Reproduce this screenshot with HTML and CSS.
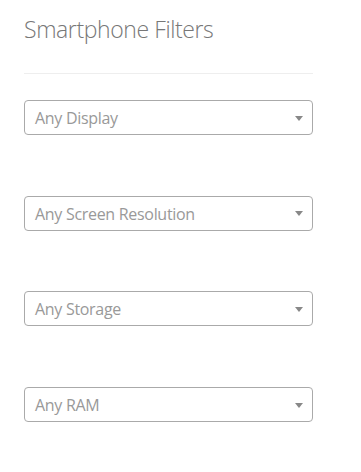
FILE: index.html
```html
<!DOCTYPE html>
<html>
<head>
<meta charset="utf-8">
<link rel="stylesheet" href="styles.css">
</head>
<body>
<div class="panel">
  <h2 class="title">Smartphone Filters</h2>
  <hr class="divider">
  <div class="filters">
    <div class="select"><span>Any Display</span><i class="caret"></i></div>
    <div class="select"><span>Any Screen Resolution</span><i class="caret"></i></div>
    <div class="select"><span>Any Storage</span><i class="caret"></i></div>
    <div class="select"><span>Any RAM</span><i class="caret"></i></div>
  </div>
</div>
</body>
</html>
```
FILE: styles.css
```css
html, body { margin: 0; padding: 0; background: #fff; }
body { font-family: "Open Sans", "Noto Sans", sans-serif; }
.panel { width: 289px; padding: 14px 0 0 24px; }
.title {
  margin: 0;
  font-weight: 300;
  font-size: 23px;
  line-height: 30px;
  color: #777;
  letter-spacing: -0.4px;
}
.divider {
  margin: 29px 0 0 0;
  border: 0;
  border-top: 1px solid #eee;
  height: 0;
}
.filters { display: flex; flex-direction: column; gap: 60.7px; padding-top: 26px; }
.select {
  box-sizing: border-box;
  height: 35px;
  border: 1px solid #aaa;
  border-radius: 4px;
  display: flex;
  align-items: center;
  justify-content: space-between;
  padding: 1px 9px 0 10px;
  color: #999;
  font-size: 16px;
  letter-spacing: -0.3px;
}
.caret {
  width: 0; height: 0;
  border-left: 4px solid transparent;
  border-right: 4px solid transparent;
  border-top: 5px solid #888;
  margin-top: 0;
}
```
